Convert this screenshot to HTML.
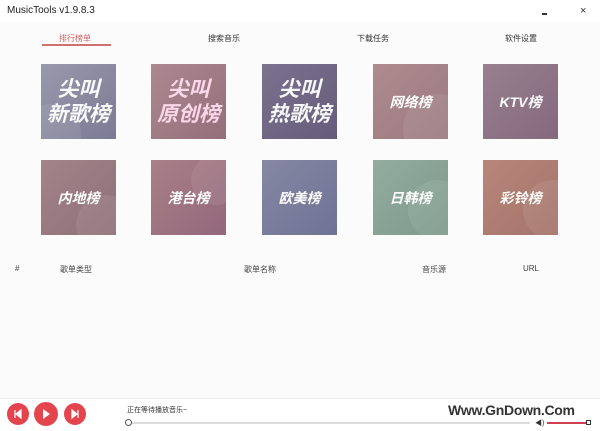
<!DOCTYPE html><html><head><meta charset="utf-8"><style>
*{margin:0;padding:0;box-sizing:border-box}
body{width:600px;height:431px;overflow:hidden;background:#fbfbfc;font-family:"Liberation Sans","Noto Sans CJK SC",sans-serif;position:relative}
.a{position:absolute}
.t{position:absolute;width:75px;height:75px;color:#fff;font-weight:bold;font-style:italic;display:flex;align-items:center;justify-content:center;text-align:center;overflow:hidden}
.t .c{position:absolute;border-radius:50%;background:rgba(255,255,255,.08)}
.s{font-size:14px;position:relative}
.b{font-size:21px;line-height:25px;position:relative;opacity:.95}
.tab{position:absolute;top:33px;font-size:8px;color:#333}
.h{position:absolute;top:264px;font-size:8px;color:#444}
</style></head><body>
<div class="a" style="left:0;top:0;width:600px;height:22px;background:#fff"></div>
<div class="a" style="left:7px;top:5px;font-size:10px;color:#222">MusicTools v1.9.8.3</div>
<div class="a" style="left:542px;top:13px;width:5px;height:2px;background:#333"></div>
<div class="a" style="left:580px;top:5px;font-size:11px;color:#333">×</div>
<div class="tab" style="left:59px;color:#d06060">排行榜单</div>
<div class="a" style="left:42px;top:44px;width:69px;height:2px;background:#d07070"></div>
<div class="tab" style="left:208px">搜索音乐</div>
<div class="tab" style="left:357px">下载任务</div>
<div class="tab" style="left:505px">软件设置</div>

<div class="t" style="left:41px;top:64px;background:linear-gradient(135deg,#9a98ac,#7d7b94)"><div class="c" style="width:60px;height:60px;left:-20px;top:40px"></div><div class="b">尖叫<br>新歌榜</div></div>
<div class="t" style="left:151px;top:64px;background:linear-gradient(135deg,#ab8991,#946f7b)"><div class="b" style="color:#fde">尖叫<br>原创榜</div></div>
<div class="t" style="left:262px;top:64px;background:linear-gradient(135deg,#7b7290,#655c7a)"><div class="b">尖叫<br>热歌榜</div></div>
<div class="t" style="left:373px;top:64px;background:linear-gradient(135deg,#ad8b8f,#9b7a80)"><div class="c" style="width:70px;height:70px;left:30px;top:30px"></div><div class="s">网络榜</div></div>
<div class="t" style="left:483px;top:64px;background:linear-gradient(135deg,#98808f,#84697c)"><div class="s">KTV榜</div></div>

<div class="t" style="left:41px;top:160px;background:linear-gradient(135deg,#a3848a,#8f6f78)"><div class="c" style="width:60px;height:60px;left:35px;top:35px"></div><div class="s">内地榜</div></div>
<div class="t" style="left:151px;top:160px;background:linear-gradient(135deg,#a98089,#93677a)"><div class="c" style="width:50px;height:50px;left:40px;top:-5px"></div><div class="s">港台榜</div></div>
<div class="t" style="left:262px;top:160px;background:linear-gradient(135deg,#8587a3,#6f7394)"><div class="s">欧美榜</div></div>
<div class="t" style="left:373px;top:160px;background:linear-gradient(135deg,#93ac9f,#7d9a8c)"><div class="c" style="width:60px;height:60px;left:35px;top:20px"></div><div class="s">日韩榜</div></div>
<div class="t" style="left:483px;top:160px;background:linear-gradient(135deg,#b88679,#a4736a)"><div class="c" style="width:60px;height:60px;left:40px;top:20px"></div><div class="s">彩铃榜</div></div>

<div class="h" style="left:15px">#</div>
<div class="h" style="left:60px">歌单类型</div>
<div class="h" style="left:244px">歌单名称</div>
<div class="h" style="left:422px">音乐源</div>
<div class="h" style="left:523px">URL</div>

<div class="a" style="left:0;top:398px;width:600px;height:33px;background:#fff;border-top:1px solid #eee"></div>
<svg class="a" style="left:0;top:398px" width="100" height="33">
<circle cx="18" cy="16" r="11" fill="#e4444e"/><circle cx="46" cy="16" r="12" fill="#e4444e"/><circle cx="75" cy="16" r="11" fill="#e4444e"/>
<path d="M15 12v8M21 12l-5 4 5 4z" fill="#fff" stroke="#fff" stroke-width="1.2"/>
<path d="M43 11l7 5-7 5z" fill="#fff"/>
<path d="M78 12v8M72 12l5 4-5 4z" fill="#fff" stroke="#fff" stroke-width="1.2"/>
</svg>
<div class="a" style="left:127px;top:405px;font-size:7px;color:#333">正在等待播放音乐~</div>
<div class="a" style="left:130px;top:422px;width:400px;height:2px;background:#ddd"></div>
<div class="a" style="left:125px;top:419px;width:7px;height:7px;border:1px solid #555;border-radius:50%;background:#fff"></div>
<div class="a" style="left:448px;top:402px;font-size:14px;font-weight:bold;color:#333;letter-spacing:-.3px">Www.GnDown.Com</div>
<div class="a" style="left:535px;top:418px;font-size:7px;color:#333">◀)</div>
<div class="a" style="left:547px;top:422px;width:40px;height:2px;background:#d04050"></div>
<div class="a" style="left:586px;top:420px;width:5px;height:5px;border:1px solid #333;background:#fff"></div>
</body></html>
